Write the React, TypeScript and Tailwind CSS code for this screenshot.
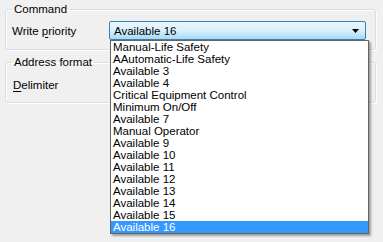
import React from 'react';

const ITEMS = [
  'Manual-Life Safety',
  'AAutomatic-Life Safety',
  'Available 3',
  'Available 4',
  'Critical Equipment Control',
  'Minimum On/Off',
  'Available 7',
  'Manual Operator',
  'Available 9',
  'Available 10',
  'Available 11',
  'Available 12',
  'Available 13',
  'Available 14',
  'Available 15',
  'Available 16',
];

export default function App() {
  return (
    <div
      className="relative w-[383px] h-[242px] overflow-hidden bg-[#f0f0f0] text-[11.5px] text-black pt-[2px]"
      style={{ fontFamily: '"Liberation Sans", Arial, sans-serif' }}
    >
      {/* Command */}
      <fieldset className="ml-[5px] w-[371px] h-[48px] border border-[#d5dfe5] rounded-[3px] px-[3px] shadow-[inset_1px_1px_0_#fff,1px_1px_0_#fff]">
        <legend className="px-[2px] ml-[3px] leading-[14px]">Command</legend>
        <div className="flex items-center mt-[5px] ml-[3px]">
          <span className="w-[97px] leading-[14px]">
            Write <span className="underline underline-offset-2">p</span>riority
          </span>
          <div className="w-[257px] h-[19px] flex items-center justify-between border border-[#3c7fb1] rounded-[2px] bg-gradient-to-b from-[#eaf6fd] via-[#d9f0fc] to-[#a7d9f5] pl-[4px] pr-[6px]">
            <span className="leading-[14px]">Available 16</span>
            <svg width="7" height="4" viewBox="0 0 7 4">
              <path d="M0 0h7L3.5 4z" fill="#000" />
            </svg>
          </div>
        </div>
      </fieldset>

      {/* Address format */}
      <fieldset className="ml-[5px] mt-[5px] w-[371px] h-[48px] border border-[#d5dfe5] rounded-[3px] px-[3px] shadow-[inset_1px_1px_0_#fff,1px_1px_0_#fff]">
        <legend className="px-[2px] ml-[3px] leading-[14px]">Address format</legend>
        <div className="mt-[9px] ml-[4px] leading-[14px]">
          <span className="underline underline-offset-2">D</span>elimiter
        </div>
      </fieldset>

      {/* Drop-down list */}
      <div className="absolute left-[110px] top-[40px] w-[259px] border border-[#646464] bg-white shadow-[2px_2px_2px_rgba(0,0,0,0.35)]">
        {ITEMS.map((item, i) => (
          <div
            key={item}
            className={
              i === ITEMS.length - 1
                ? 'h-[12px] leading-[12px] pl-[2px] bg-[#3399ff] text-white'
                : 'h-[12px] leading-[12px] pl-[2px]'
            }
          >
            {item}
          </div>
        ))}
      </div>
    </div>
  );
}
